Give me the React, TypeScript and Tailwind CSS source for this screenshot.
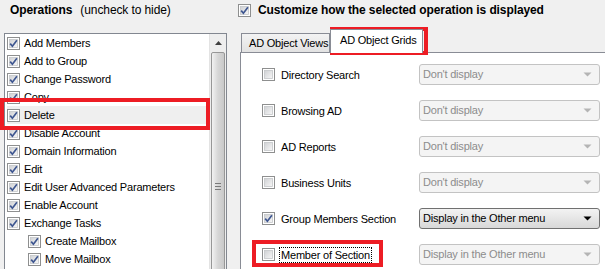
import React from 'react'

const font = { fontFamily: '"Liberation Sans", Arial, sans-serif' }

const operations = [
  { label: 'Add Members' },
  { label: 'Add to Group' },
  { label: 'Change Password' },
  { label: 'Copy' },
  { label: 'Delete', selected: true },
  { label: 'Disable Account' },
  { label: 'Domain Information' },
  { label: 'Edit' },
  { label: 'Edit User Advanced Parameters' },
  { label: 'Enable Account' },
  { label: 'Exchange Tasks' },
  { label: 'Create Mailbox', indent: true },
  { label: 'Move Mailbox', indent: true },
]

const gridRows = [
  { label: 'Directory Search', checked: false, value: "Don't display", enabled: false },
  { label: 'Browsing AD', checked: false, value: "Don't display", enabled: false },
  { label: 'AD Reports', checked: false, value: "Don't display", enabled: false },
  { label: 'Business Units', checked: false, value: "Don't display", enabled: false },
  { label: 'Group Members Section', checked: true, value: 'Display in the Other menu', enabled: true },
  { label: 'Member of Section', checked: false, value: 'Display in the Other menu', enabled: false, focused: true },
]

function Checkbox({ checked }: { checked: boolean }) {
  return (
    <svg width="13" height="13" viewBox="0 0 13 13" className="shrink-0">
      <defs>
        <linearGradient id="cbFill" x1="0" y1="0" x2="1" y2="1">
          <stop offset="0" stopColor="#cfd1d4" />
          <stop offset="1" stopColor="#f7f7f7" />
        </linearGradient>
      </defs>
      <rect x="0.5" y="0.5" width="12" height="12" fill="#ffffff" stroke="#8e8f8f" />
      <rect x="2.5" y="2.5" width="8" height="8" fill="url(#cbFill)" stroke="#c4c6c9" strokeWidth="0.8" />
      {checked && (
        <path d="M3.2 6.6 L5.4 9.2 L9.9 3.3" fill="none" stroke="#3e5690" strokeWidth="1.7" />
      )}
    </svg>
  )
}

function Arrow({ color }: { color: string }) {
  return (
    <svg width="9" height="5" viewBox="0 0 9 5">
      <path d="M0.5 0.5 L8.5 0.5 L4.5 4.5 Z" fill={color} />
    </svg>
  )
}

function Dropdown({ value, enabled }: { value: string; enabled: boolean }) {
  return (
    <div
      className={
        enabled
          ? 'flex items-center justify-between shrink-0 w-[181px] h-[21px] pl-[3px] pr-[7px] rounded-[3px] border border-[#707070] bg-gradient-to-b from-[#f3f3f3] to-[#d8d8d8] text-black'
          : 'flex items-center justify-between shrink-0 w-[181px] h-[21px] pl-[3px] pr-[7px] rounded-[3px] border border-[#c3c3c3] bg-[#f4f4f4] text-[#8c8c8c]'
      }
    >
      <span>{value}</span>
      <Arrow color={enabled ? '#000000' : '#b4b4b4'} />
    </div>
  )
}

function Scrollbar() {
  return (
    <div className="w-[17px] shrink-0 flex flex-col bg-[#eeeeee] border-l border-[#e3e3e3]">
      <div className="h-[18px] shrink-0 flex items-center justify-center">
        <svg width="7" height="4" viewBox="0 0 7 4">
          <path d="M0 4 L3.5 0 L7 4 Z" fill="#404040" />
        </svg>
      </div>
      <div className="flex-1 mx-[1px] rounded-[2px] border border-[#979797] bg-gradient-to-r from-[#f2f2f2] via-[#d6d6d6] to-[#c9c9c9] flex flex-col items-center pt-[130px]">
        <div className="flex flex-col gap-[2px]">
          <div className="w-[6px] h-px bg-[#7a7a7a]" />
          <div className="w-[6px] h-px bg-[#7a7a7a]" />
          <div className="w-[6px] h-px bg-[#7a7a7a]" />
        </div>
      </div>
    </div>
  )
}

export default function App() {
  return (
    <div
      className="relative w-[605px] h-[269px] overflow-hidden bg-[#f0f0f0] flex text-[11px] tracking-[-0.2px] text-black"
      style={font}
    >
      {/* Operations list */}
      <div className="w-[227px] pl-[4px] flex flex-col shrink-0">
        <div className="h-[33px] shrink-0 pl-[6px] pt-[3px] leading-[14px] text-[12px] tracking-[-0.1px]">
          <span className="font-bold">Operations</span>
          <span className="ml-[8px]">(uncheck to hide)</span>
        </div>
        <div className="flex h-[260px] shrink-0 bg-white border border-b-0 border-[#828790]">
          <div className="flex-1 pl-[2px]">
            {operations.map((op) => (
              <div
                key={op.label}
                className={
                  'flex items-center gap-[4px] h-[18px] ' +
                  (op.indent ? 'pl-[21px] ' : '') +
                  (op.selected ? 'bg-[#efefef]' : '')
                }
              >
                <Checkbox checked />
                <span className="leading-[14px]">{op.label}</span>
              </div>
            ))}
          </div>
          <Scrollbar />
        </div>
      </div>

      {/* Display settings */}
      <div className="flex-1 flex flex-col">
        <div className="h-[29px] shrink-0 pl-[11px] pt-[4px] flex items-start gap-[7px]">
          <Checkbox checked />
          <span className="font-bold text-[12px] tracking-[-0.1px] leading-[13px]">
            Customize how the selected operation is displayed
          </span>
        </div>
        <div className="ml-[13px] flex-1 flex flex-col">
          <div className="h-[23px] shrink-0 flex items-end">
            <div className="ml-[1px] w-[89px] h-[19px] border border-b-0 border-[#898c95] bg-gradient-to-b from-[#f3f3f3] to-[#e2e2e2] pl-[7px] leading-[18px]">
              AD Object Views
            </div>
            <div className="relative z-10 -mb-px w-[93px] h-[24px] border border-b-0 border-[#898c95] bg-white pl-[9px] leading-[20px]">
              AD Object Grids
            </div>
          </div>
          <div className="flex-1 bg-white border-t border-l border-[#898c95] pt-[11px] pl-[21px]">
            {gridRows.map((row) => (
              <div key={row.label} className="flex items-center shrink-0 h-[21px] mb-[15px]">
                <div className="w-[157px] shrink-0 flex items-center gap-[6px]">
                  <Checkbox checked={row.checked} />
                  <span
                    className={
                      row.focused
                        ? 'border border-dotted border-black px-[1px] -ml-[2px] leading-[14px]'
                        : 'leading-[14px]'
                    }
                  >
                    {row.label}
                  </span>
                </div>
                <Dropdown value={row.value} enabled={row.enabled} />
              </div>
            ))}
          </div>
        </div>
      </div>

      {/* Annotation highlights */}
      <div className="absolute left-0 top-[98px] w-[210px] h-[32px] border-[4px] border-[#ed1c24]" />
      <div className="absolute left-[330px] top-[27px] w-[98px] h-[28px] border-[4px] border-[#ed1c24]" />
      <div className="absolute left-[252px] top-[240px] w-[131px] h-[27px] border-[4px] border-[#ed1c24]" />
    </div>
  )
}
